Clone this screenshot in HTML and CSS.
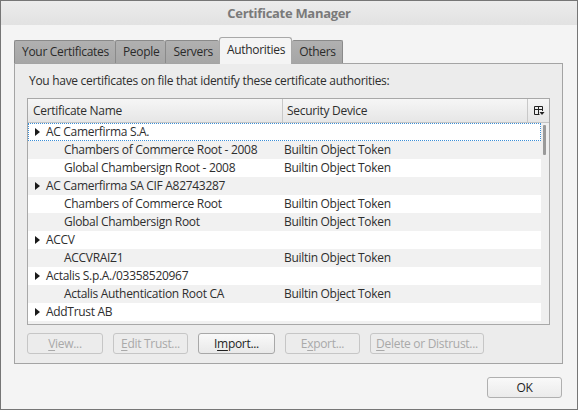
FILE: index.html
```html
<!DOCTYPE html>
<html>
<head>
<meta charset="utf-8">
<link rel="stylesheet" href="styles.css">
</head>
<body>
<div class="window">
  <div class="titlebar">Certificate Manager</div>
  <div class="content">
    <div class="tabs">
      <div class="tab">Your Certificates</div>
      <div class="tab">People</div>
      <div class="tab">Servers</div>
      <div class="tab active">Authorities</div>
      <div class="tab">Others</div>
    </div>
    <div class="panel">
      <div class="desc">You have certificates on file that identify these certificate authorities:</div>
      <div class="table">
        <div class="thead">
          <div class="th c1">Certificate Name</div>
          <div class="th c2">Security Device</div>
          <div class="th picker">
            <svg width="11" height="10" viewBox="0 0 11 10">
              <path d="M0.5 0.5H8.5V5M0.5 0.5V8.5H5.5M0.5 3.5H8.5M4.5 0.5V8.5" fill="none" stroke="#222" stroke-width="1"/>
              <path d="M5.5 6H10.5L8 9Z" fill="#222"/>
            </svg>
          </div>
        </div>
        <div class="tbody">
          <div class="rows">
            <div class="row odd focus"><div class="cell c1 parent"><span class="tri"></span>AC Camerfirma S.A.</div><div class="cell c2"></div></div>
            <div class="row even"><div class="cell c1 child">Chambers of Commerce Root - 2008</div><div class="cell c2">Builtin Object Token</div></div>
            <div class="row odd"><div class="cell c1 child">Global Chambersign Root - 2008</div><div class="cell c2">Builtin Object Token</div></div>
            <div class="row even"><div class="cell c1 parent"><span class="tri"></span>AC Camerfirma SA CIF A82743287</div><div class="cell c2"></div></div>
            <div class="row odd"><div class="cell c1 child">Chambers of Commerce Root</div><div class="cell c2">Builtin Object Token</div></div>
            <div class="row even"><div class="cell c1 child">Global Chambersign Root</div><div class="cell c2">Builtin Object Token</div></div>
            <div class="row odd"><div class="cell c1 parent"><span class="tri"></span>ACCV</div><div class="cell c2"></div></div>
            <div class="row even"><div class="cell c1 child">ACCVRAIZ1</div><div class="cell c2">Builtin Object Token</div></div>
            <div class="row odd"><div class="cell c1 parent"><span class="tri"></span>Actalis S.p.A./03358520967</div><div class="cell c2"></div></div>
            <div class="row even"><div class="cell c1 child">Actalis Authentication Root CA</div><div class="cell c2">Builtin Object Token</div></div>
            <div class="row odd"><div class="cell c1 parent"><span class="tri"></span>AddTrust AB</div><div class="cell c2"></div></div>
            <div class="row even"><div class="cell c1 child"></div><div class="cell c2"></div></div>
          </div>
          <div class="scrollbar"><div class="thumb"></div></div>
        </div>
      </div>
      <div class="buttons">
        <div class="btn disabled w76"><u>V</u>iew...</div>
        <div class="btn disabled w75"><u>E</u>dit Trust...</div>
        <div class="btn w77">I<u>m</u>port...</div>
        <div class="btn disabled w75">E<u>x</u>port...</div>
        <div class="btn disabled w114"><u>D</u>elete or Distrust...</div>
      </div>
    </div>
    <div class="footer">
      <div class="btn ok">OK</div>
    </div>
  </div>
</div>
</body>
</html>
```

FILE: styles.css
```css
* { box-sizing: border-box; }
html, body { margin: 0; padding: 0; }
body {
  width: 578px;
  height: 410px;
  font-family: "Open Sans", "Noto Sans", sans-serif;
  font-size: 12px;
  letter-spacing: -0.3px;
  color: #2e2e2e;
  background: #f4f4f4;
}
.window {
  width: 578px;
  height: 410px;
  border: 1px solid #767676;
  background: #f4f4f4;
  display: flex;
  flex-direction: column;
}
.titlebar {
  height: 24px;
  line-height: 24px;
  text-align: center;
  font-weight: bold;
  font-size: 13px;
  letter-spacing: -0.3px;
  color: #7a7a7a;
  background: linear-gradient(#ececec, #e2e2e2);
  flex: none;
}
.content {
  padding: 13px 15px 0 13px;
  flex: 1;
  display: flex;
  flex-direction: column;
}
.tabs {
  display: flex;
  align-items: flex-end;
  height: 25px;
  position: relative;
  z-index: 1;
}
.tab {
  height: 23px;
  line-height: 21px;
  padding: 0 6px 0 7px;
  border: 1px solid #8a8a8a;
  border-bottom: none;
  border-right: none;
  background: linear-gradient(#b0b0b0, #a6a6a6);
  color: #2a2a2a;
  border-radius: 2px 2px 0 0;
}
.tab:nth-child(5) { border-right: 1px solid #8a8a8a; }
.tab.active {
  line-height: 24px;
  background: #f4f4f4;
  border: 1px solid #a8a8a8;
  border-bottom: none;
  border-radius: 3px 3px 0 0;
  padding: 0 6px 0 7px;
  margin-bottom: -1px;
  height: 27px;
}
.tab.active + .tab { border-left: none; }
.panel {
  width: 549px;
  height: 301px;
  border: 1px solid #a4a4a4;
  background: #ececec;
  padding: 0 12px 0 12px;
  display: flex;
  flex-direction: column;
}
.desc {
  height: 34px;
  line-height: 17px;
  padding: 8px 0 0 2px;
}
.table {
  height: 227px;
  border: 1px solid #a8a8a8;
  background: #fff;
  display: flex;
  flex-direction: column;
  overflow: hidden;
}
.thead {
  display: flex;
  height: 24px;
  border-bottom: 1px solid #c4c4c4;
  background: linear-gradient(#f6f6f6, #e6e6e6);
  flex: none;
}
.th {
  line-height: 23px;
  padding-left: 5px;
  border-right: 1px solid #c8c8c8;
}
.th.c1 { width: 255px; }
.th.c2 { width: 245px; padding-left: 4px; }
.th.picker {
  flex: 1;
  border-right: none;
  display: flex;
  align-items: center;
  justify-content: center;
  padding-left: 2px;
}
.tbody {
  flex: 1;
  display: flex;
  overflow: hidden;
}
.rows {
  width: 513px;
  flex: none;
}
.row {
  height: 18px;
  line-height: 18px;
  display: flex;
  white-space: nowrap;
}
.row.odd { background: #ffffff; }
.row.even { background: #f1f1f1; }
.row.focus { outline: 1px dotted #3d8fd6; outline-offset: -1px; }
.cell.c1 { width: 255px; }
.cell.c2 { padding-left: 1px; }
.cell.parent { padding-left: 7px; display: flex; align-items: center; }
.cell.child { padding-left: 36px; }
.tri {
  width: 0;
  height: 0;
  border-top: 4px solid transparent;
  border-bottom: 4px solid transparent;
  border-left: 5px solid #1a1a1a;
  margin-right: 6px;
}
.scrollbar {
  flex: 1;
  background: #efefef;
  padding: 2px 1px 0 2px;
}
.thumb {
  width: 3px;
  height: 30px;
  background: #9a9a9a;
  border-radius: 1px;
}
.buttons {
  display: flex;
  gap: 10px;
  margin-top: 8px;
}
.btn {
  height: 21px;
  line-height: 19px;
  border: 1px solid #a8a8a8;
  border-radius: 3px;
  background: linear-gradient(#f9f9f9, #e9e9e9);
  text-align: center;
  color: #1e1e1e;
}
.btn.disabled {
  color: #a9a9a9;
  border-color: #c6c6c6;
  background: #ececec;
}
.btn u { text-decoration-thickness: 1px; text-underline-offset: 2px; }
.w75 { width: 75px; }
.w76 { width: 76px; }
.w77 { width: 77px; }
.w114 { width: 114px; }
.footer {
  display: flex;
  justify-content: flex-end;
  margin-top: 13px;
}
.btn.ok {
  width: 75px;
  background: linear-gradient(#f9f9f9, #ebebeb);
  border-color: #b0b0b0;
}
```
